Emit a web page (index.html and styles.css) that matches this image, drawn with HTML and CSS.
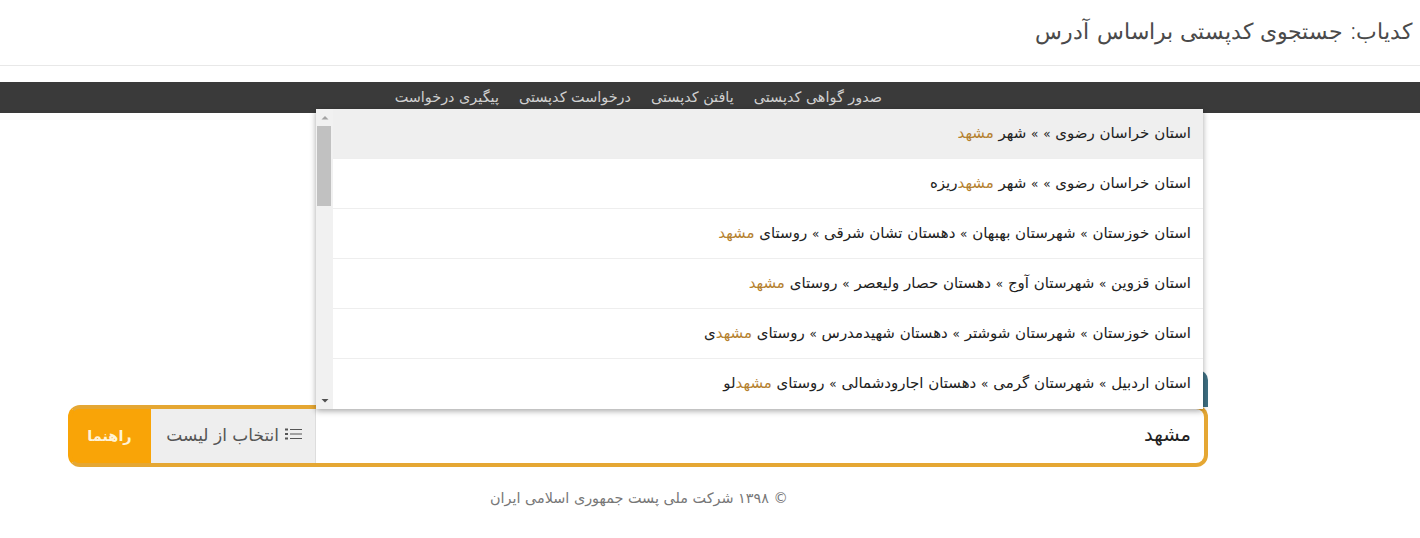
FILE: index.html
```html
<!DOCTYPE html>
<html lang="fa" dir="rtl">
<head>
<meta charset="utf-8">
<title>کدیاب</title>
<link rel="stylesheet" href="styles.css">
</head>
<body>
<header class="page-head"><h1>کدیاب: جستجوی کدپستی براساس آدرس</h1></header>
<nav class="nav">
  <a>صدور گواهی کدپستی</a>
  <a>یافتن کدپستی</a>
  <a>درخواست کدپستی</a>
  <a>پیگیری درخواست</a>
</nav>
<main class="main">
  <div class="search-wrap">
    <div class="tab-edge"></div>
    <div class="search">
      <div class="query">مشهد</div>
      <div class="pick">
        <svg class="list-icon" viewBox="0 0 18 14" width="18" height="14"><path d="M6 2.500h12M6 7h12M6 11.500h12" stroke="#555" stroke-width="1" fill="none"/><path d="M1 1.500h3v2H1zM1 6h3v2H1zM1 10.500h3v2H1z" fill="#555"/></svg>
        <span>انتخاب از لیست</span>
      </div>
      <div class="guide">راهنما</div>
    </div>
    <div class="drop">
      <ul class="items">
        <li class="on">استان خراسان رضوی <i>»</i> <i>»</i> شهر <b>مشهد</b></li>
        <li>استان خراسان رضوی <i>»</i> <i>»</i> شهر <b>مشهد</b>ریزه</li>
        <li>استان خوزستان <i>»</i> شهرستان بهبهان <i>»</i> دهستان تشان شرقی <i>»</i> روستای <b>مشهد</b></li>
        <li>استان قزوین <i>»</i> شهرستان آوج <i>»</i> دهستان حصار ولیعصر <i>»</i> روستای <b>مشهد</b></li>
        <li>استان خوزستان <i>»</i> شهرستان شوشتر <i>»</i> دهستان شهیدمدرس <i>»</i> روستای <b>مشهد</b>ی</li>
        <li>استان اردبیل <i>»</i> شهرستان گرمی <i>»</i> دهستان اجارودشمالی <i>»</i> روستای <b>مشهد</b>لو</li>
      </ul>
      <div class="bar">
        <svg class="arrow" viewBox="0 0 16 17" width="16" height="17"><path d="M4.500 10.500h7L8 7z" fill="#a3a3a3"/></svg>
        <div class="thumb"></div>
        <svg class="arrow end" viewBox="0 0 16 17" width="16" height="17"><path d="M4.500 7h7L8 10.500z" fill="#505050"/></svg>
      </div>
    </div>
  </div>
  <footer class="foot">© ۱۳۹۸ شرکت ملی پست جمهوری اسلامی ایران</footer>
</main>
</body>
</html>
```
FILE: styles.css
```css
* { box-sizing: border-box; }
html, body { margin: 0; padding: 0; }
body {
  background: #fff;
  font-family: "DejaVu Sans", "Noto Sans", sans-serif;
  color: #333;
  height: 538px;
  overflow: hidden;
}
.page-head {
  height: 66px;
  border-bottom: 1px solid #e8e8e8;
  padding: 16px 8px 0 0;
}
.page-head h1 {
  margin: 0;
  font-family: "Noto Sans", "DejaVu Sans", sans-serif;
  font-weight: 300;
  font-size: 22.400px;
  word-spacing: 1.500px;
  line-height: 30px;
  color: #4a4a4a;
}
.nav {
  margin-top: 16px;
  height: 31px;
  background: #3a3a3a;
  display: flex;
  gap: 20px;
  padding: 0 538px 0 0;
  align-items: flex-start;
}
.nav a {
  color: #d0d0d0;
  font-size: 14.400px;
  line-height: 30px;
  white-space: nowrap;
}
.main { display: flex; flex-direction: column; }
.search-wrap {
  position: relative;
  width: 1140px;
  margin: 292px 212px 0 68px;
  align-self: flex-end;
}
.tab-edge {
  position: absolute;
  top: -35px;
  right: 0;
  width: 30px;
  height: 37px;
  background: #3e6f82;
  border-radius: 0 10px 0 0;
}
.search {
  position: relative;
  height: 62px;
  border: 4px solid #e5a733;
  border-left-color: #f9a407;
  border-radius: 12px;
  background: #f9a407;
  display: flex;
  overflow: hidden;
}
.query {
  flex: 1;
  background: #fff;
  font-size: 19.500px;
  line-height: 52px;
  color: #222;
  padding-right: 13px;
}
.pick {
  width: 165px;
  background: #eee;
  display: flex;
  align-items: center;
  gap: 5px;
  padding: 0 13px 2px 0;
  border-right: 1px solid #ddd;
  font-size: 17px;
  color: #555;
  white-space: nowrap;
}
.list-icon { margin-top: -2px; flex: none; }
.guide {
  width: 79px;
  background: #f9a407;
  color: #fff3d6;
  font-size: 14.500px;
  font-weight: 700;
  line-height: 54px;
  text-align: center;
  padding-right: 4px;
}
.drop {
  position: absolute;
  top: -296px;
  left: 248px;
  width: 887px;
  height: 300px;
  background: #fff;
  box-shadow: 0 2px 6px rgba(0, 0, 0, .35);
  display: flex;
}
.items { list-style: none; margin: 0; padding: 0; flex: 1; }
.items li {
  height: 50px;
  line-height: 48px;
  padding-right: 12px;
  border-bottom: 1px solid #eee;
  font-size: 15px;
  color: #222;
  white-space: nowrap;
}
.items li:last-child { border-bottom: 0; }
.items li.on { background: #efefef; }
.items b { font-weight: 400; color: #b5812f; }
.items i { font-style: normal; font-size: 12px; }
.bar {
  width: 17px;
  background: #f1f1f1;
  display: flex;
  flex-direction: column;
}
.arrow { display: block; flex: none; }
.arrow.end { margin-top: auto; }
.thumb { height: 80px; width: 14px; margin-right: 2px; background: #c1c1c1; }
.foot {
  margin-top: 19px;
  padding-right: 632px;
  font-size: 14.400px;
  line-height: 24px;
  color: #777;
  white-space: nowrap;
}
```
